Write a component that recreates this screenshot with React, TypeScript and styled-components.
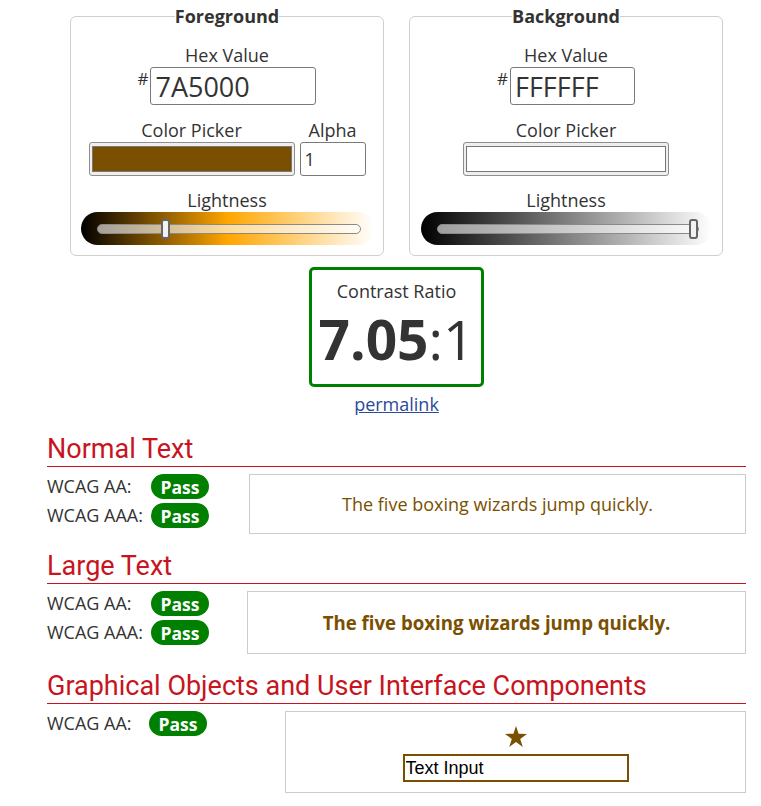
import React from "react";
import styled, { createGlobalStyle } from "styled-components";

const GlobalStyle = createGlobalStyle`
  html, body { margin: 0; padding: 0; background: #fff; }
  body {
    font-family: "Open Sans", "Noto Sans", sans-serif;
    color: #333;
    font-size: 18px;
    line-height: 24px;
  }
  * { box-sizing: border-box; }
`;

const Page = styled.main`
  width: 699px;
  margin-left: 47px;
  padding-top: 4px;
  padding-bottom: 12px;
`;

const ColorPanels = styled.div`
  display: flex;
  justify-content: center;
  gap: 25px;
`;

const Panel = styled.fieldset`
  width: 314px;
  min-width: 0;
  margin: 0;
  padding: 15px 0 10px;
  border: 1px solid #cfcfcf;
  border-radius: 6px;
  display: flex;
  flex-direction: column;
  align-items: center;
`;

const PanelTitle = styled.legend`
  margin: 0 auto;
  padding: 0;
  font-weight: 700;
  font-size: 18px;
  line-height: 24px;
`;

const Stack = styled.div`
  display: flex;
  flex-direction: column;
  align-items: center;
`;

const Field = styled.div<{ $mt?: number }>`
  display: flex;
  flex-direction: column;
  align-items: center;
  margin-top: ${(p) => p.$mt ?? 0}px;
`;

const FieldLabel = styled.label`
  font-size: 18px;
  line-height: 24px;
  text-align: center;
`;

const HexRow = styled.div`
  display: flex;
  align-items: flex-start;
`;

const Hash = styled.span`
  font-size: 17px;
  line-height: 18px;
  margin-top: 3px;
  margin-right: 2px;
`;

const HexInput = styled.input<{ $w: number }>`
  width: ${(p) => p.$w}px;
  height: 38px;
  border: 1px solid #7a7a7a;
  border-radius: 3px;
  padding: 0 4px;
  font-family: "Open Sans", sans-serif;
  font-size: 27px;
  color: #333;
  background: #fff;
`;

const PickerRow = styled.div`
  display: flex;
  align-items: flex-end;
  gap: 5px;
`;

const Swatch = styled.div`
  width: 206px;
  height: 34px;
  padding: 3px 2px;
  border: 1px solid #8e8e8e;
  border-radius: 3px;
  background: #efefef;
`;

const SwatchFill = styled.div<{ $c: string }>`
  width: 100%;
  height: 100%;
  border: 1px solid #777;
  background: ${(p) => p.$c};
`;

const AlphaInput = styled.input`
  width: 66px;
  height: 34px;
  border: 1px solid #7a7a7a;
  border-radius: 3px;
  padding: 0 4px;
  font-family: "Open Sans", sans-serif;
  font-size: 18px;
  color: #333;
`;

const Slider = styled.div<{ $w: number; $grad: string }>`
  width: ${(p) => p.$w}px;
  height: 33px;
  border-radius: 17px;
  background: ${(p) => p.$grad};
  padding: 0 13px 0 16px;
  display: flex;
  align-items: center;
`;

const Track = styled.div`
  position: relative;
  flex: 1;
  height: 10px;
  border: 1px solid #8a8a8a;
  border-radius: 5px;
  background: rgba(255, 255, 255, 0.6);
`;

const Thumb = styled.div`
  position: absolute;
  top: 50%;
  width: 9px;
  height: 20px;
  margin-top: -10px;
  border: 2px solid #666;
  border-radius: 3px;
  background: #f2f2f2;
`;

const RatioBox = styled.section`
  width: 175px;
  margin: 11px auto 0;
  border: 3px solid #008000;
  border-radius: 5px;
  padding: 11px 0 8px;
  text-align: center;
`;

const RatioLabel = styled.div`
  font-size: 18px;
  line-height: 20px;
`;

const RatioValue = styled.div`
  font-size: 55px;
  line-height: 75px;
  font-weight: 400;
  strong { font-weight: 700; }
`;

const LinkRow = styled.div`
  text-align: center;
  margin-top: 5px;
  line-height: 24px;
`;

const Permalink = styled.a`
  color: #2b4a98;
  text-decoration: underline;
  font-size: 18px;
`;

const Section = styled.section`
  margin-top: 18px;
  & + & { margin-top: 17px; }
`;

const SectionTitle = styled.h2`
  margin: 0;
  font-family: Roboto, "Liberation Sans", sans-serif;
  font-weight: 400;
  font-size: 27px;
  line-height: 30px;
  color: #c8141e;
  padding-bottom: 2px;
  border-bottom: 1px solid #c8141e;
`;

const ResultRow = styled.div`
  display: flex;
  align-items: flex-start;
  margin-top: 7px;
`;

const Results = styled.div<{ $w: number; $label: number }>`
  width: ${(p) => p.$w}px;
  flex: none;
  display: grid;
  grid-template-columns: ${(p) => p.$label}px auto;
  row-gap: 4px;
  align-items: center;
  justify-items: start;
`;

const Level = styled.span`
  font-size: 18px;
  line-height: 25px;
`;

const Badge = styled.span`
  display: inline-flex;
  align-items: center;
  justify-content: center;
  width: 58px;
  height: 25px;
  border-radius: 13px;
  background: #008000;
  color: #fff;
  font-weight: 700;
  font-size: 17.5px;
`;

const Sample = styled.div<{ $h: number }>`
  flex: 1;
  height: ${(p) => p.$h}px;
  border: 1px solid #cccccc;
  display: flex;
  align-items: center;
  justify-content: center;
  color: #7a5000;
`;

const SampleText = styled.span<{ $large?: boolean }>`
  font-size: ${(p) => (p.$large ? 18.67 : 18)}px;
  font-weight: ${(p) => (p.$large ? 700 : 400)};
`;

const UiSample = styled(Sample)`
  flex-direction: column;
  justify-content: flex-start;
  padding-top: 14px;
  gap: 7px;
`;

const DemoInput = styled.input`
  width: 226px;
  height: 28px;
  border: 2px solid #7a5000;
  padding: 0 1px;
  font-family: "Liberation Sans", Arial, sans-serif;
  font-size: 18px;
  color: #000;
  background: #fff;
`;

const Star = () => (
  <svg width="22" height="21" viewBox="0 0 22 21" aria-hidden="true">
    <polygon
      points="11,0 13.6,7.8 22,7.9 15.2,12.9 17.8,21 11,16.1 4.2,21 6.8,12.9 0,7.9 8.4,7.8"
      fill="#7a5000"
    />
  </svg>
);

const thumbLeft = (fraction: number, trackW: number) => fraction * (trackW - 2 - 9);

export default function App() {
  return (
    <>
      <GlobalStyle />
      <Page>
        <ColorPanels>
          <Panel>
            <PanelTitle>Foreground</PanelTitle>
            <Stack>
              <Field>
                <FieldLabel>Hex Value</FieldLabel>
                <HexRow>
                  <Hash>#</Hash>
                  <HexInput $w={166} defaultValue="7A5000" />
                </HexRow>
              </Field>
              <PickerRow>
                <Field $mt={13}>
                  <FieldLabel>Color Picker</FieldLabel>
                  <Swatch>
                    <SwatchFill $c="#7a5000" />
                  </Swatch>
                </Field>
                <Field>
                  <FieldLabel>Alpha</FieldLabel>
                  <AlphaInput defaultValue="1" />
                </Field>
              </PickerRow>
              <Field $mt={12}>
                <FieldLabel>Lightness</FieldLabel>
                <Slider $w={293} $grad="linear-gradient(to right, #000 0%, hsl(39, 100%, 50%) 50%, #fff 100%)">
                  <Track>
                    <Thumb style={{ left: thumbLeft(0.25, 264) }} />
                  </Track>
                </Slider>
              </Field>
            </Stack>
          </Panel>
          <Panel>
            <PanelTitle>Background</PanelTitle>
            <Stack>
              <Field>
                <FieldLabel>Hex Value</FieldLabel>
                <HexRow>
                  <Hash>#</Hash>
                  <HexInput $w={125} defaultValue="FFFFFF" />
                </HexRow>
              </Field>
              <Field $mt={13}>
                <FieldLabel>Color Picker</FieldLabel>
                <Swatch>
                  <SwatchFill $c="#ffffff" />
                </Swatch>
              </Field>
              <Field $mt={12}>
                <FieldLabel>Lightness</FieldLabel>
                <Slider $w={291} $grad="linear-gradient(to right, #000 0%, #808080 50%, #fff 100%)">
                  <Track>
                    <Thumb style={{ left: thumbLeft(1, 262) }} />
                  </Track>
                </Slider>
              </Field>
            </Stack>
          </Panel>
        </ColorPanels>

        <RatioBox>
          <RatioLabel>Contrast Ratio</RatioLabel>
          <RatioValue>
            <strong>7.05</strong>:1
          </RatioValue>
        </RatioBox>
        <LinkRow>
          <Permalink href="#">permalink</Permalink>
        </LinkRow>

        <Section>
          <SectionTitle>Normal Text</SectionTitle>
          <ResultRow>
            <Results $w={202} $label={104}>
              <Level>WCAG AA:</Level>
              <Badge>Pass</Badge>
              <Level>WCAG AAA:</Level>
              <Badge>Pass</Badge>
            </Results>
            <Sample $h={60}>
              <SampleText>The five boxing wizards jump quickly.</SampleText>
            </Sample>
          </ResultRow>
        </Section>

        <Section>
          <SectionTitle>Large Text</SectionTitle>
          <ResultRow>
            <Results $w={200} $label={104}>
              <Level>WCAG AA:</Level>
              <Badge>Pass</Badge>
              <Level>WCAG AAA:</Level>
              <Badge>Pass</Badge>
            </Results>
            <Sample $h={63}>
              <SampleText $large>The five boxing wizards jump quickly.</SampleText>
            </Sample>
          </ResultRow>
        </Section>

        <Section>
          <SectionTitle>Graphical Objects and User Interface Components</SectionTitle>
          <ResultRow>
            <Results $w={238} $label={102}>
              <Level>WCAG AA:</Level>
              <Badge>Pass</Badge>
            </Results>
            <UiSample $h={82}>
              <Star />
              <DemoInput defaultValue="Text Input" />
            </UiSample>
          </ResultRow>
        </Section>
      </Page>
    </>
  );
}
